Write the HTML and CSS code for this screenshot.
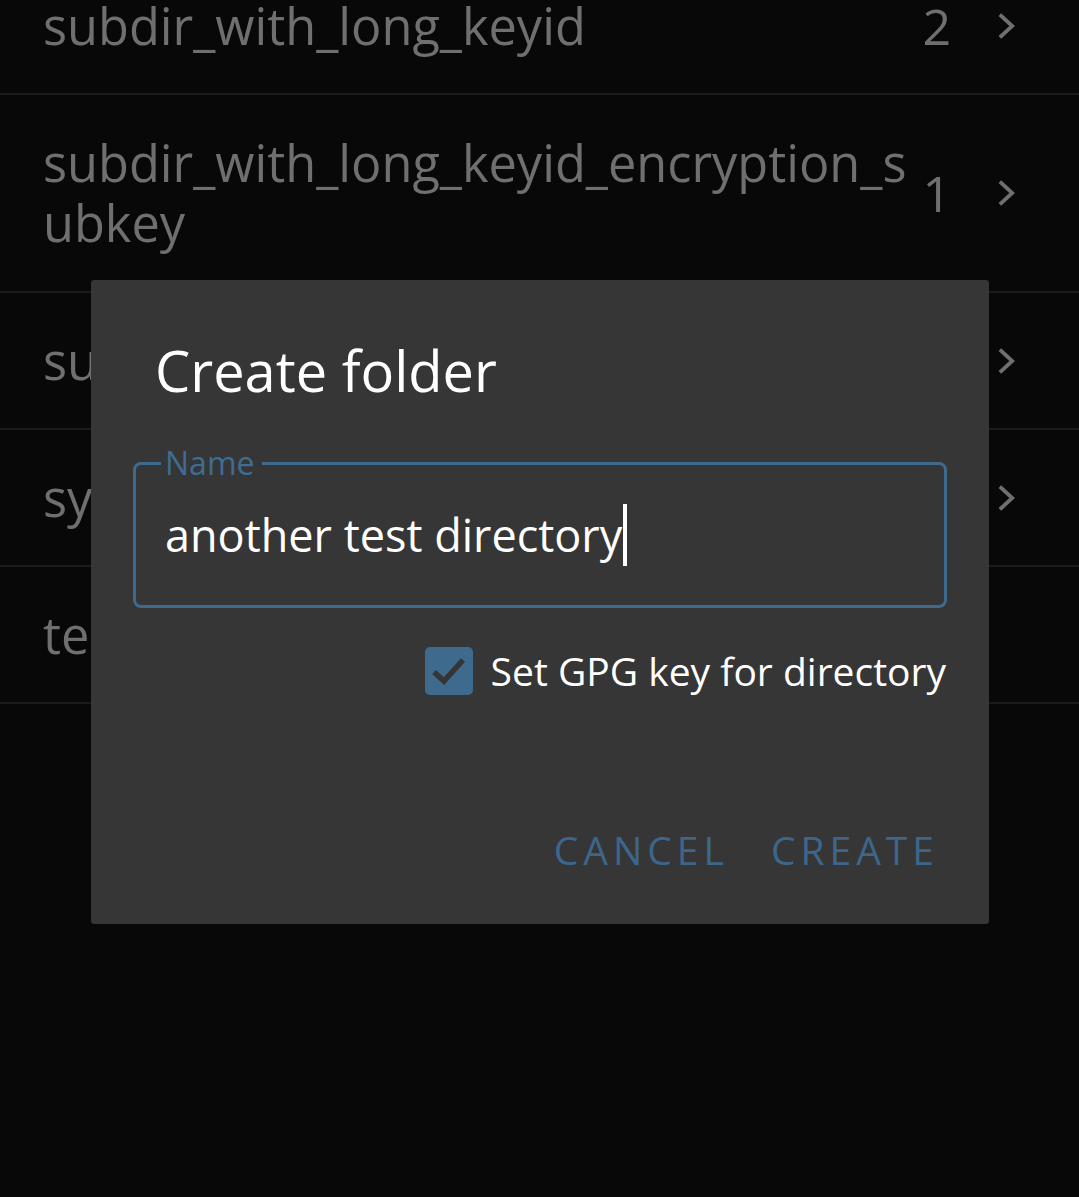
FILE: index.html
```html
<!DOCTYPE html>
<html>
<head>
<meta charset="utf-8">
<link rel="stylesheet" href="styles.css">
</head>
<body>
<div class="list">
  <div class="row">
    <div class="name">subdir_with_long_keyid</div>
    <div class="count">2</div>
    <svg class="chev" viewBox="0 0 20 30"><path d="M3 3 L16 15 L3 27" fill="none" stroke="currentColor" stroke-width="4"/></svg>
  </div>
  <div class="row tall">
    <div class="name">subdir_with_long_keyid_encryption_subkey</div>
    <div class="count">1</div>
    <svg class="chev" viewBox="0 0 20 30"><path d="M3 3 L16 15 L3 27" fill="none" stroke="currentColor" stroke-width="4"/></svg>
  </div>
  <div class="row">
    <div class="name">subdir_with_subkey</div>
    <div class="count"></div>
    <svg class="chev" viewBox="0 0 20 30"><path d="M3 3 L16 15 L3 27" fill="none" stroke="currentColor" stroke-width="4"/></svg>
  </div>
  <div class="row">
    <div class="name">symlinks</div>
    <div class="count"></div>
    <svg class="chev" viewBox="0 0 20 30"><path d="M3 3 L16 15 L3 27" fill="none" stroke="currentColor" stroke-width="4"/></svg>
  </div>
  <div class="row">
    <div class="name">test</div>
  </div>
</div>

<div class="dialog">
  <h1 class="title">Create folder</h1>
  <fieldset class="field">
    <legend class="label">Name</legend>
    <div class="value">another test directory<span class="caret"></span></div>
  </fieldset>
  <div class="check-row">
    <span class="box"><svg viewBox="0 0 48 48"><path d="M9 25 L19 34 L38 13" fill="none" stroke="#353535" stroke-width="5.5"/></svg></span>
    <span class="check-label">Set GPG key for directory</span>
  </div>
  <div class="actions">
    <span class="btn">CANCEL</span>
    <span class="btn">CREATE</span>
  </div>
</div>
</body>
</html>
```

FILE: styles.css
```css
html, body {
  margin: 0;
  padding: 0;
  background: #080808;
  height: 100%;
  overflow: hidden;
  font-family: "Open Sans", "Noto Sans", sans-serif;
}

.list {
  margin-top: -42px;
}

.row {
  display: flex;
  align-items: center;
  border-bottom: 2px solid #1b1b1b;
  padding-left: 43px;
  padding-right: 63px;
  color: #6f6f6f;
  box-sizing: border-box;
  height: 137px;
}

.row.tall {
  height: 198px;
}

.name {
  flex: 1;
  font-size: 50.5px;
  line-height: 60px;
  word-break: break-all;
  min-width: 0;
}

.count {
  font-size: 50px;
  width: 30px;
  text-align: right;
  margin-right: 46px;
}

.chev {
  width: 19px;
  height: 30px;
  color: #6f6f6f;
}

.dialog {
  position: absolute;
  left: 91px;
  top: 280px;
  width: 898px;
  height: 644px;
  background: #363636;
  border-radius: 3px;
  box-sizing: border-box;
  padding: 0 42px 0 42px;
}

.title {
  margin: 0;
  padding: 52px 0 0 22px;
  font-weight: 400;
  font-size: 56px;
  line-height: 76px;
  color: #ffffff;
}

.field {
  margin: 40px 0 0 0;
  border: 3px solid #3e6a8e;
  border-radius: 8px;
  padding: 0 0 0 29px;
  height: 160px;
  box-sizing: border-box;
}

.label {
  padding: 0 8px 0 4px;
  margin-left: -4px;
  font-size: 32px;
  line-height: 30px;
  color: #3f6c92;
}

.value {
  font-size: 45px;
  color: #ffffff;
  line-height: 62px;
  margin-top: 26px;
  display: flex;
  align-items: center;
}

.caret {
  display: inline-block;
  width: 4px;
  height: 62px;
  background: #ffffff;
  margin-left: 1px;
}

.check-row {
  display: flex;
  justify-content: flex-end;
  align-items: center;
  margin-top: 35px;
  padding-right: 1px;
}

.box {
  width: 48px;
  height: 48px;
  background: #3e6a8e;
  border-radius: 5px;
  display: flex;
  margin-right: 18px;
}

.box svg {
  width: 48px;
  height: 48px;
}

.check-label {
  font-size: 39px;
  color: #ffffff;
  line-height: 56px;
}

.actions {
  display: flex;
  justify-content: flex-end;
  gap: 42px;
  margin-top: 126px;
  padding-right: 8px;
}

.btn {
  font-size: 39px;
  letter-spacing: 5px;
  color: #3c668b;
  line-height: 50px;
}
```
